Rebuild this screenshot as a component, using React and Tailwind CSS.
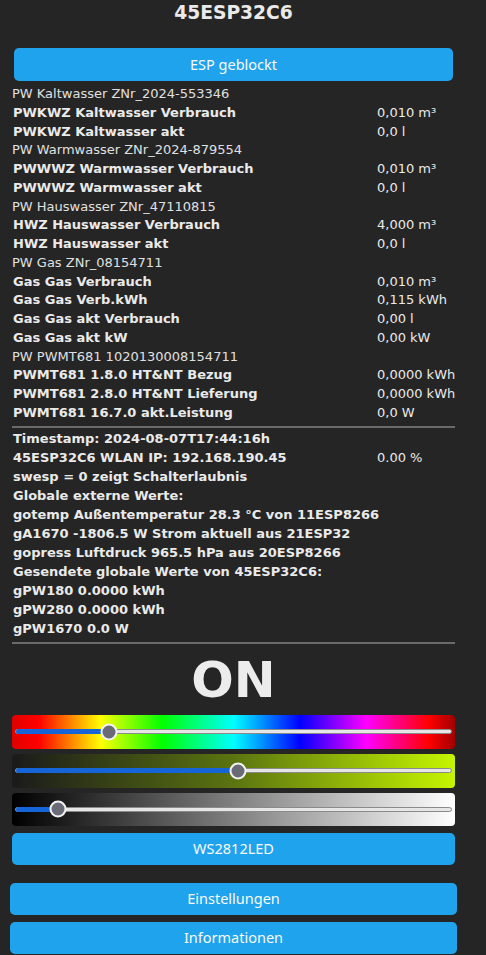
import React from "react";

const meters = [
  { head: "PW Kaltwasser ZNr_2024-553346" },
  { label: "PWKWZ Kaltwasser Verbrauch", value: "0,010 m³" },
  { label: "PWKWZ Kaltwasser akt", value: "0,0 l" },
  { head: "PW Warmwasser ZNr_2024-879554" },
  { label: "PWWWZ Warmwasser Verbrauch", value: "0,010 m³" },
  { label: "PWWWZ Warmwasser akt", value: "0,0 l" },
  { head: "PW Hauswasser ZNr_47110815" },
  { label: "HWZ Hauswasser Verbrauch", value: "4,000 m³" },
  { label: "HWZ Hauswasser akt", value: "0,0 l" },
  { head: "PW Gas ZNr_08154711" },
  { label: "Gas Gas Verbrauch", value: "0,010 m³" },
  { label: "Gas Gas Verb.kWh", value: "0,115 kWh" },
  { label: "Gas Gas akt Verbrauch", value: "0,00 l" },
  { label: "Gas Gas akt kW", value: "0,00 kW" },
  { head: "PW PWMT681 1020130008154711" },
  { label: "PWMT681 1.8.0 HT&NT Bezug", value: "0,0000 kWh" },
  { label: "PWMT681 2.8.0 HT&NT Lieferung", value: "0,0000 kWh" },
  { label: "PWMT681 16.7.0 akt.Leistung", value: "0,0 W" },
];

const infos = [
  { label: "Timestamp: 2024-08-07T17:44:16h" },
  { label: "45ESP32C6 WLAN IP: 192.168.190.45", value: "0.00 %" },
  { label: "swesp = 0 zeigt Schalterlaubnis" },
  { label: "Globale externe Werte:" },
  { label: "gotemp Außentemperatur 28.3 °C von 11ESP8266" },
  { label: "gA1670 -1806.5 W Strom aktuell aus 21ESP32" },
  { label: "gopress Luftdruck 965.5 hPa aus 20ESP8266" },
  { label: "Gesendete globale Werte von 45ESP32C6:" },
  { label: "gPW180 0.0000 kWh" },
  { label: "gPW280 0.0000 kWh" },
  { label: "gPW1670 0.0 W" },
];

const Button = ({ children, className = "" }) => (
  <button
    className={`block bg-[#1fa3ec] text-[#fafafa] rounded-[5px] font-['Noto_Sans',sans-serif] text-[14.5px] ${className}`}
  >
    {children}
  </button>
);

// slider: pos is the thumb centre in px from the track's left edge
const Slider = ({ bg, pos, className = "" }) => (
  <div className={`rounded-[4px] px-[3px] flex items-center ${bg} ${className}`}>
    <div className="relative w-full h-[5px] rounded-full bg-[#e6e6e6] border border-[#8a8a8a]">
      <div
        className="absolute left-0 top-[-1px] h-[5px] rounded-full bg-[#1565d8]"
        style={{ width: pos }}
      />
      <div
        className="absolute top-1/2 w-[17px] h-[17px] -translate-x-1/2 -translate-y-1/2 rounded-full bg-[#6b6b78] border-2 border-[#f2f2f2]"
        style={{ left: pos }}
      />
    </div>
  </div>
);

export default function App() {
  return (
    <div className="min-h-screen bg-[#252525] text-[#eaeaea] font-['DejaVu_Sans',Verdana,sans-serif] text-[13px] overflow-hidden">
      <h3 className="w-[467px] text-center font-bold text-[18.7px] leading-[22px] pt-[2px] h-[48px]">
        45ESP32C6
      </h3>

      <Button className="ml-[14px] w-[439px] h-[33px]">ESP geblockt</Button>

      <div className="mt-[4px] pl-[12px]">
        {meters.map((r, i) =>
          r.head ? (
            <div key={i} className="h-[18.76px] leading-[18.76px] text-[#e0e0e0]">
              {r.head}
            </div>
          ) : (
            <div key={i} className="grid grid-cols-[365px_1fr] h-[18.76px] leading-[18.76px]">
              <span className="font-bold pl-[1px]">{r.label}</span>
              <span>{r.value}</span>
            </div>
          )
        )}
      </div>

      <div className="ml-[12px] w-[443px] h-[2px] bg-[#6a6a6a] mt-[3px]" />

      <div className="pl-[13px] mt-[1px]">
        {infos.map((r, i) => (
          <div key={i} className="grid grid-cols-[364px_1fr] h-[19.1px] leading-[19.1px]">
            <span className="font-bold whitespace-nowrap">{r.label}</span>
            <span>{r.value}</span>
          </div>
        ))}
      </div>

      <div className="ml-[12px] w-[443px] h-[2px] bg-[#6a6a6a] mt-[3px]" />

      <div className="w-[467px] text-center font-bold text-[50px] leading-[62px] mt-[5px] text-[#ececec]">
        ON
      </div>

      <div className="ml-[12px] w-[443px] flex flex-col gap-[5px] mt-[4px]">
        <Slider
          className="h-[34px]"
          pos={93}
          bg="bg-[linear-gradient(to_right,#e00000_0%,#ff0000_6%,#ffff00_20%,#00ff00_34%,#00ffff_50%,#0000ff_65%,#ff00ff_80%,#ff0000_94%,#a00000_100%)]"
        />
        <Slider
          className="h-[34px]"
          pos={222}
          bg="bg-[linear-gradient(to_right,#1a1a1a_0%,#5b7410_50%,#c6f500_100%)]"
        />
        <Slider
          className="h-[33px]"
          pos={42}
          bg="bg-[linear-gradient(to_right,#000000_0%,#ffffff_100%)]"
        />
      </div>

      <Button className="ml-[12px] w-[443px] h-[32px] mt-[7px]">WS2812LED</Button>

      <Button className="ml-[10px] w-[447px] h-[32px] mt-[18px]">Einstellungen</Button>
      <Button className="ml-[10px] w-[447px] h-[32px] mt-[7px]">Informationen</Button>
    </div>
  );
}
